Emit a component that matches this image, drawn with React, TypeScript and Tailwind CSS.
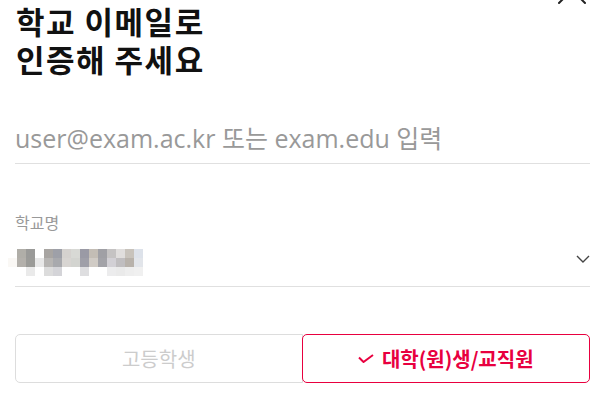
const mosaic = [
  ['#ffffff', '#b0aea8', '#9a9a98', '#ffffff', '#a8a5a2', '#9ea0a8', '#d5d2cf', '#d8d9d5', '#9a9aa5', '#c3bdb5', '#a0a0a5', '#c5c3c3', '#e0dedd', '#c8c3bc', '#dde2ea'],
  ['#faf8f5', '#b3b0ab', '#9b9b98', '#e8e8e8', '#b7b5b3', '#a8a9ad', '#d8d5d2', '#d3d4d0', '#9f9fa8', '#d0cbc5', '#a3a3a8', '#d2d0d5', '#c0bec0', '#b8b2ab', '#e2e5ea'],
  ['#ffffff', '#ffffff', '#eaeaea', '#ffffff', '#dcdcdc', '#d4d4d8', '#ffffff', '#ffffff', '#dedee0', '#ffffff', '#ffffff', '#ececed', '#eaeaea', '#eeeeee', '#f0f0f0'],
]

// blurred (mosaic) school name, as in the capture
function BlurredValue() {
  return (
    <div className="-ml-[7px] mt-[6px] flex flex-col" aria-hidden>
      {mosaic.map((row, r) => (
        <div key={r} className="flex">
          {row.map((c, i) => (
            <div key={i} className="h-[9px] w-[9px]" style={{ backgroundColor: c }} />
          ))}
        </div>
      ))}
    </div>
  )
}

export default function App() {
  return (
    <div
      className="relative h-[400px] w-[605px] overflow-hidden bg-white px-[15px]"
      style={{ fontFamily: '"Noto Sans CJK KR", "Noto Sans", sans-serif' }}
    >
      <button type="button" aria-label="닫기" className="absolute right-[18px] top-[-25px] h-[30px] w-[30px]">
        <svg viewBox="0 0 30 30" className="h-[30px] w-[30px]">
          <path d="M2 2 L28 28 M28 2 L2 28" stroke="#222" strokeWidth="2" strokeLinecap="round" />
        </svg>
      </button>

      <h1 className="pl-[1px] pt-[2px] text-[31px] font-bold leading-[38px] tracking-[1.5px] text-[#111]">
        학교 이메일로
        <br />
        인증해 주세요
      </h1>

      <input
        type="email"
        placeholder="user@exam.ac.kr 또는 exam.edu 입력"
        className="mt-[34px] block h-[52px] w-full border-b border-[#e0e0e0] bg-transparent text-[25px] text-[#333] outline-none placeholder:text-[#999]"
        style={{ fontFamily: '"Open Sans", "Noto Sans CJK KR", sans-serif' }}
      />

      <div className="mt-[48px] text-[16px] leading-[20px] text-[#999]">학교명</div>
      <div className="flex h-[55px] items-center justify-between border-b border-[#e0e0e0]">
        <BlurredValue />
        <svg viewBox="0 0 14 8" className="h-[8px] w-[14px]" aria-hidden>
          <path d="M1 1 L7 7 L13 1" fill="none" stroke="#444" strokeWidth="1.4" />
        </svg>
      </div>

      <div className="mt-[47px] grid h-[49px] grid-cols-2">
        <button
          type="button"
          className="flex items-center justify-center rounded-l-[5px] border border-[#dddddd] text-[20px] text-[#cccccc]"
        >
          고등학생
        </button>
        <button
          type="button"
          className="relative -ml-px flex items-center justify-center gap-[8px] rounded-[5px] border border-[#e8003f] text-[20px] font-bold text-[#e8003f]"
        >
          <svg viewBox="0 0 16 9" className="h-[9px] w-[16px]" aria-hidden>
            <path d="M1 3.5 L5.5 8 L15 1" fill="none" stroke="#e8003f" strokeWidth="2" />
          </svg>
          대학(원)생/교직원
        </button>
      </div>
    </div>
  )
}
